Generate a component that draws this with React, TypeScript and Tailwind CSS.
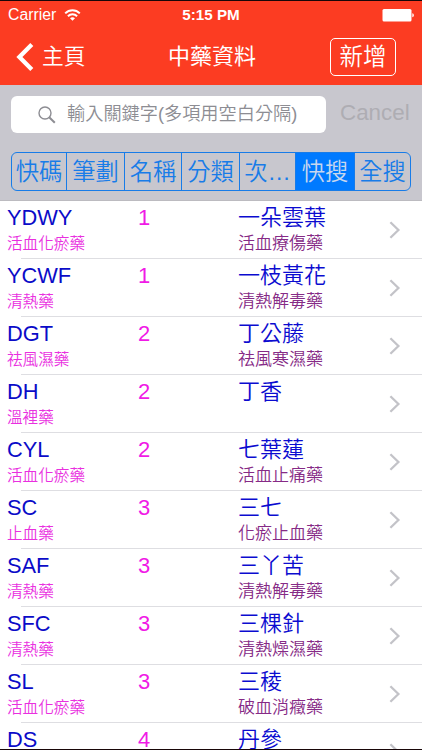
type Herb = { code: string; kind: string; strokes: number; name: string; detail: string };

const herbs: Herb[] = [
  { code: 'YDWY', kind: '活血化瘀藥', strokes: 1, name: '一朵雲葉', detail: '活血療傷藥' },
  { code: 'YCWF', kind: '清熱藥', strokes: 1, name: '一枝黃花', detail: '清熱解毒藥' },
  { code: 'DGT', kind: '祛風濕藥', strokes: 2, name: '丁公藤', detail: '祛風寒濕藥' },
  { code: 'DH', kind: '溫裡藥', strokes: 2, name: '丁香', detail: '' },
  { code: 'CYL', kind: '活血化瘀藥', strokes: 2, name: '七葉蓮', detail: '活血止痛藥' },
  { code: 'SC', kind: '止血藥', strokes: 3, name: '三七', detail: '化瘀止血藥' },
  { code: 'SAF', kind: '清熱藥', strokes: 3, name: '三丫苦', detail: '清熱解毒藥' },
  { code: 'SFC', kind: '清熱藥', strokes: 3, name: '三棵針', detail: '清熱燥濕藥' },
  { code: 'SL', kind: '活血化瘀藥', strokes: 3, name: '三稜', detail: '破血消癥藥' },
  { code: 'DS', kind: '', strokes: 4, name: '丹參', detail: '' },
];

const segments = [
  { label: '快碼', size: 'w-[54px]' },
  { label: '筆劃', size: 'w-[58px]' },
  { label: '名稱', size: 'w-[57px]' },
  { label: '分類', size: 'w-[58px]' },
  { label: '次…', size: 'w-[56px]' },
  { label: '快搜', size: 'w-[59px]', active: true },
  { label: '全搜', size: 'w-[56px]' },
];

function StatusBar() {
  return (
    <div className="grid h-7 grid-cols-3 items-center pl-2 pr-2 text-[15.8px] leading-none">
      <div className="flex items-center gap-2">
        <span>Carrier</span>
        <svg width="17" height="12" viewBox="0 0 16 12" fill="none" stroke="white" strokeWidth="2">
          <path d="M0.7 4.4C4.8 0.2 11.2 0.2 15.3 4.4" />
          <path d="M3.4 7.2C6 4.7 10 4.7 12.6 7.2" />
          <path d="M8 11.8L5.5 9.3C6.9 8 9.1 8 10.5 9.3Z" fill="white" stroke="none" />
        </svg>
      </div>
      <span className="text-center text-[15.2px] font-bold">5:15 PM</span>
      <svg className="justify-self-end" width="32" height="13" viewBox="0 0 32 13" fill="white">
        <rect x="0.5" y="0" width="29" height="12.5" rx="1.5" />
        <path d="M30.3 4.2C32.4 5 32.4 7.5 30.3 8.3Z" />
      </svg>
    </div>
  );
}

function Row({ herb }: { herb: Herb }) {
  return (
    <li className="flex h-[58px] shrink-0 flex-col">
      <div className="flex h-[57px] pl-[7px]">
        <div className="w-[131px] shrink-0">
          <div className="my-1.5 h-[21px] text-[21.8px] leading-[21px] text-[#0b0bc8]">{herb.code}</div>
          <div className="h-[20px] text-[15.6px] leading-[20px] text-[#e930df]">{herb.kind}</div>
        </div>
        <div className="my-1.5 h-[21px] w-[100px] shrink-0 text-[22px] leading-[21px] text-[#f01ae6]">{herb.strokes}</div>
        <div className="flex-1">
          <div className="my-1.5 h-[21px] text-[22px] leading-[21px] text-[#0b0bd0]">{herb.name}</div>
          <div className="h-[20px] text-[17px] leading-[20px] text-[#862a86]">{herb.detail}</div>
        </div>
        <svg className="mr-[21px] mt-[20px] shrink-0" width="12" height="18" viewBox="0 0 12 18" fill="none" stroke="#c3c3c8" strokeWidth="2.3">
          <path d="M1.4 1.2L9.4 9L1.4 16.8" />
        </svg>
      </div>
      <div className="ml-[21px] h-px bg-[#dedee2]" />
    </li>
  );
}

export default function App() {
  return (
    <div className="flex h-[750px] w-[422px] flex-col overflow-hidden border-y border-[#180608] bg-white font-['Liberation_Sans','Noto_Sans_CJK_TC',sans-serif] font-[350]">
      <header className="h-[84px] shrink-0 bg-[#fc3c22] text-white">
        <StatusBar />
        <div className="grid h-14 grid-cols-[168px_1fr_167px] items-center">
          <div className="flex items-center gap-[8px] pl-4">
            <svg width="18" height="28" viewBox="0 0 18 28" fill="none" stroke="white" strokeWidth="4.3">
              <path d="M15.8 1.6L3.4 14L15.8 26.4" />
            </svg>
            <span className="text-[21.7px] leading-8">主頁</span>
          </div>
          <h1 className="whitespace-nowrap text-[22px] font-normal leading-8">中藥資料</h1>
          <button className="ml-[74px] flex h-[38px] w-[66px] items-center justify-center rounded-[5px] border border-white text-[23.5px] leading-8">
            新增
          </button>
        </div>
      </header>

      <section className="h-[116px] shrink-0 border-b border-[#bcbbc0] bg-[#c8c7ce] pl-[11px] pt-[11px]">
        <div className="flex items-start">
          <div className="flex h-[37px] w-[315px] items-center rounded-[6px] bg-white pl-[27px] text-[#8d8d93]">
            <svg width="18" height="18" viewBox="0 0 18 18" fill="none" stroke="#8d8d93" strokeWidth="1.4">
              <circle cx="7" cy="7" r="6" />
              <path d="M11.2 11.2L16.8 16.8" strokeWidth="2" />
            </svg>
            <span className="mb-0.5 ml-[11px] whitespace-nowrap text-[18.2px] leading-8">輸入關鍵字(多項用空白分隔)</span>
          </div>
          <span className="ml-[14px] text-[22.4px] leading-[34px] text-[#aeadb3]">Cancel</span>
        </div>
        <div className="mt-[19px] flex h-[39px] w-[400px] overflow-hidden rounded-[6px] border border-[#187ce8] text-[23.3px] text-[#187ce8]">
          {segments.map((s, i) => (
            <div
              key={s.label}
              className={`${s.size} flex shrink-0 items-center justify-center whitespace-nowrap leading-8 ${i > 0 ? 'border-l border-[#187ce8]' : ''} ${s.active ? 'bg-[#007aff] text-[#c8d7ee]' : ''}`}
            >
              {s.label}
            </div>
          ))}
        </div>
      </section>

      <ul className="flex flex-1 flex-col overflow-hidden">
        {herbs.map((h) => (
          <Row key={h.code} herb={h} />
        ))}
      </ul>
    </div>
  );
}
